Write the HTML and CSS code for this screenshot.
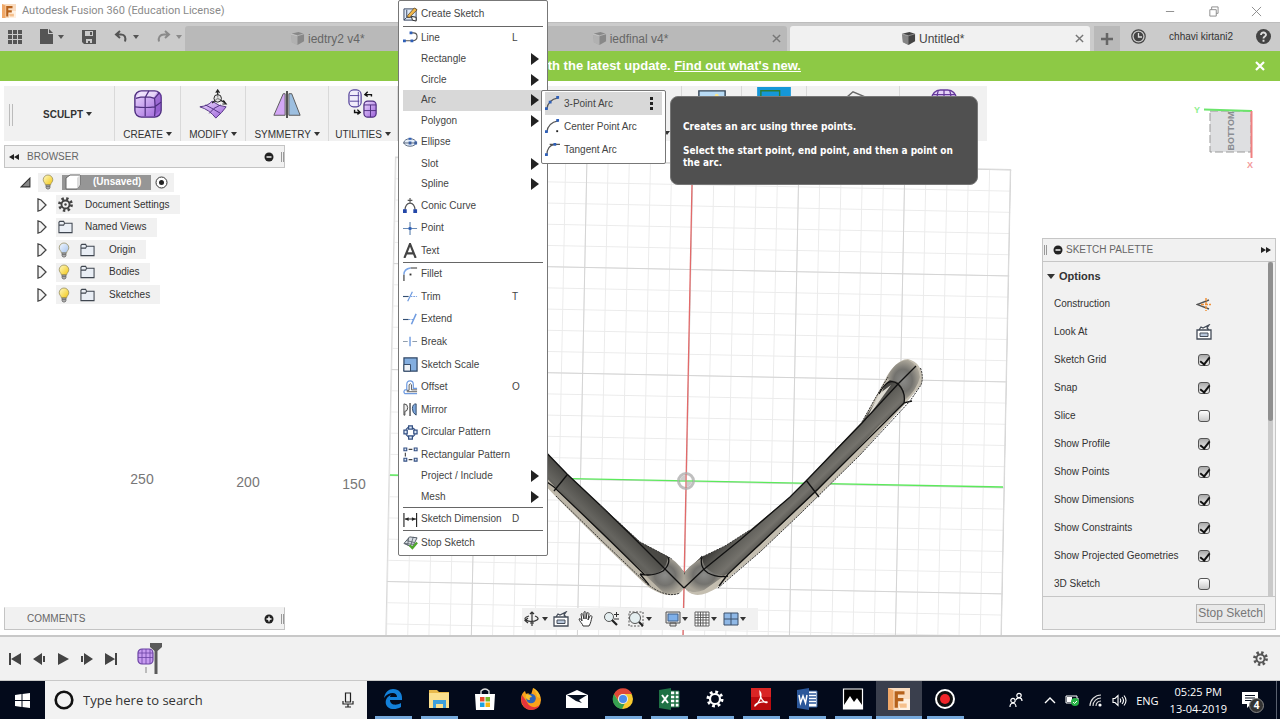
FILE: index.html
```html
<!DOCTYPE html>
<html lang="en">
<head>
<meta charset="utf-8">
<title>Autodesk Fusion 360 (Education License)</title>
<link rel="stylesheet" href="styles.css">
</head>
<body>
<svg class="defs" width="0" height="0" aria-hidden="true">
  <defs>
    <linearGradient id="purple" x1="0" y1="0" x2="1" y2="1"><stop offset="0" stop-color="#eedcff"/><stop offset="1" stop-color="#9a5fd8"/></linearGradient>
    <linearGradient id="bulbOn" x1="0" y1="0" x2="1" y2="1"><stop offset="0" stop-color="#fffbc8"/><stop offset="1" stop-color="#f2c50e"/></linearGradient>
    <linearGradient id="bulbOff" x1="0" y1="0" x2="1" y2="1"><stop offset="0" stop-color="#f4f9ff"/><stop offset="1" stop-color="#a4c2ee"/></linearGradient>
    <symbol id="doc-cube" viewBox="0 0 16 16"><path fill="currentColor" d="M1 3 9 1l6 2v8l-7 4-6-3z"/><path fill="#fff" fill-opacity=".35" d="M1 3l7 2v10l-6-3z"/><path stroke="#fff" stroke-opacity=".4" fill="none" d="M1 3l7 2 7-2"/></symbol>
    <symbol id="bulb" viewBox="0 0 12 16"><path stroke="#8d8252" stroke-width=".7" d="M6 1a4.800 4.800 0 0 0-4.800 4.800c0 2.200 2 3.200 2.300 5.200h5c.3-2 2.300-3 2.300-5.200A4.800 4.800 0 0 0 6 1z"/><path fill="#aaa" stroke="#666" stroke-width=".7" d="M4 11h4v3l-1 1H5l-1-1zM4 12.500h4"/></symbol>
    <symbol id="folder" viewBox="0 0 16 14"><path fill="#e9eef5" stroke="#3f4650" stroke-width="1.100" d="M1 13V2l1-1h4l1 2h8v10zM1 5h5l1-2"/></symbol>
    <symbol id="expand" viewBox="0 0 10 14"><path fill="#f4f4f4" stroke="#444" stroke-width="1.300" d="M1 1v12l3-1 5-5-5-5z"/></symbol>
    <symbol id="gear" viewBox="0 0 16 16"><circle cx="8" cy="8" r="6.400" fill="none" stroke="currentColor" stroke-width="3" stroke-dasharray="2.510 2.510"/><circle cx="8" cy="8" r="4.300" fill="none" stroke="currentColor" stroke-width="2"/><circle cx="8" cy="8" r="1.300" fill="currentColor"/></symbol>
    <symbol id="close" viewBox="0 0 10 10"><path fill="none" stroke="currentColor" stroke-width="1.600" d="M1 1l8 8M9 1L1 9"/></symbol>
    <symbol id="tsbox" viewBox="0 0 32 32"><rect x="2" y="2" width="28" height="28" rx="7" fill="url(#purple)" stroke="#4f2f80" stroke-width="1.500"/><path fill="#7d45bd" fill-opacity=".5" d="M23 9l6-5c2 3 1 14 0 19l-6 5z"/><path fill="#fff" fill-opacity=".5" d="M3 9l5-6h18l-4 6z"/><path fill="none" stroke="#4f2f80" stroke-width="1.300" d="M3 10c7-2 14-2 20 0 1 7 1 13 0 19M23 10l5-6M13 29V9l4-7M2 19c8 1 15 1 21 0l7-5"/></symbol>
    <symbol id="lookat" viewBox="0 0 16 16"><path fill="#fff" stroke="#444c58" stroke-width="1.300" d="M1 6h14v9H1zM3 6l2-3 2 1 6-3-2 3 2 2"/><path fill="#b9c8dc" stroke="#444c58" d="M4 9h8v3.500H4z"/></symbol>
    <symbol id="arrow-right" viewBox="0 0 8 12"><path fill="#222" d="M0 0l8 6-8 6z"/></symbol>
    <symbol id="fusion" viewBox="0 0 20 20"><path fill="#f9dcc0" d="M0 0h20v20H0z"/><path fill="#f0a868" d="M0 0l5 2v18H0z"/><path fill="#fff1e2" d="M10 10h10v10H10z"/><path fill="#b5611b" d="M6 3h9v3H9v3h5v3H9v6H6z"/><path fill="#f6c08c" d="M10 14h7v4h-6z"/></symbol>
  </defs>
</svg>

<header class="titlebar">
  <svg class="app-icon" viewBox="0 0 20 20"><use href="#fusion"/></svg>
  <h1 class="app-title">Autodesk Fusion 360 (Education License)</h1>
  <div class="window-buttons">
    <button aria-label="Minimize"><svg viewBox="0 0 12 12"><path d="M1 6h9"/></svg></button>
    <button aria-label="Restore"><svg viewBox="0 0 12 12"><path d="M2 4h7v7H2zM4 4V1h7v7H9"/></svg></button>
    <button aria-label="Close window"><svg viewBox="0 0 12 12"><path d="M1 1l10 10M11 1L1 11"/></svg></button>
  </div>
</header>

<div class="tabbar">
  <div class="quick">
    <button aria-label="Data panel"><svg width="14" height="14" viewBox="0 0 14 14"><path fill="#555" d="M0 0h4v4H0zM5 0h4v4H5zM10 0h4v4h-4zM0 5h4v4H0zM5 5h4v4H5zM10 5h4v4h-4zM0 10h4v4H0zM5 10h4v4H5zM10 10h4v4h-4z"/></svg></button>
    <button aria-label="File"><svg width="13" height="15" viewBox="0 0 13 15"><path fill="#555" d="M0 0h8v5h5v10H0zM9 0l4 4H9z"/></svg><i class="caret"></i></button>
    <button aria-label="Save"><svg width="14" height="14" viewBox="0 0 14 14"><path fill="#555" fill-rule="evenodd" d="M0 0h14v14H2l-2-2zM3 1v5h8V1zm1 8v4h2v-2h2v2h2V9z"/><path fill="#555" d="M8 2h2v3H8z"/></svg></button>
    <button aria-label="Undo"><svg width="14" height="13" viewBox="0 0 14 13"><path fill="none" stroke="#555" stroke-width="2" d="M6 1L2 4.500 6 8M2 4.500h5c4 0 5 3 4 7"/></svg><i class="caret"></i></button>
    <button aria-label="Redo" class="dim"><svg width="14" height="13" viewBox="0 0 14 13"><path fill="none" stroke="#555" stroke-width="2" d="M8 1l4 3.500L8 8m4-3.500H7c-4 0-6 3-5 7"/></svg><i class="caret"></i></button>
  </div>
  <nav class="tabs">
    <a class="tab" href="#iedtry2"><span class="tab-name"><svg><use href="#doc-cube"/></svg>iedtry2 v4*</span><svg class="tab-close"><use href="#close"/></svg></a>
    <a class="tab" href="#iedfinal"><span class="tab-name"><svg><use href="#doc-cube"/></svg>iedfinal v4*</span><svg class="tab-close"><use href="#close"/></svg></a>
    <a class="tab current" href="#untitled"><span class="tab-name"><svg><use href="#doc-cube"/></svg>Untitled*</span><svg class="tab-close"><use href="#close"/></svg></a>
  </nav>
  <button class="new-tab" aria-label="New design"><svg width="12" height="12" viewBox="0 0 12 12"><path stroke="#666" stroke-width="2.500" d="M6 0v12M0 6h12"/></svg></button>
  <div class="account">
    <button aria-label="Job status"><svg width="15" height="15" viewBox="0 0 15 15"><circle cx="7.500" cy="7.500" r="6.700" fill="none" stroke="#444" stroke-width="1.200"/><circle cx="7.500" cy="7.500" r="4.800" fill="#444"/><path fill="none" stroke="#ddd" stroke-width="1.300" d="M7.500 4v4H11"/></svg></button>
    <button class="user">chhavi kirtani2</button>
    <button aria-label="Help"><svg width="15" height="15" viewBox="0 0 15 15"><circle cx="7.500" cy="7.500" r="7.500" fill="#444"/><path fill="none" stroke="#ddd" stroke-width="1.900" d="M5 6c0-3.500 5.200-3 5 0-.2 1.600-2.500 1.500-2.500 3.500M7.500 10.700v2"/></svg></button>
  </div>
</div>

<div class="banner">
  <p>with the latest update. <a href="#new">Find out what's new.</a></p>
  <button aria-label="Dismiss"><svg width="10" height="10" viewBox="0 0 10 10"><path stroke="#fff" stroke-width="2.200" d="M1 1l8 8M9 1L1 9"/></svg></button>
</div>

<main class="workspace">
  <svg class="canvas" viewBox="0 81 1280 554" preserveAspectRatio="xMidYMid slice" role="img" aria-label="Model viewport">
    <defs>
      <pattern id="minor" width="21.200" height="21.200" patternUnits="userSpaceOnUse"><path d="M0 0H21.200M0 0V21.200" stroke="#ebebeb" stroke-width="2" fill="none"/></pattern>
      <pattern id="major" width="106" height="106" patternUnits="userSpaceOnUse"><path d="M0 0H106M0 0V106" stroke="#d4d4d4" stroke-width="2" fill="none"/></pattern>
      <linearGradient id="armR" gradientUnits="userSpaceOnUse" x1="795" y1="470" x2="818" y2="494"><stop offset="0" stop-color="#3c3b38"/><stop offset=".35" stop-color="#5f5e59"/><stop offset=".7" stop-color="#74726c"/><stop offset="1" stop-color="#4b4a46"/></linearGradient>
      <linearGradient id="armL" gradientUnits="userSpaceOnUse" x1="620" y1="522" x2="602" y2="541"><stop offset="0" stop-color="#4a4945"/><stop offset=".6" stop-color="#666560"/><stop offset="1" stop-color="#55544f"/></linearGradient>
      <radialGradient id="tip"><stop offset="0" stop-color="#8b8b89"/><stop offset=".55" stop-color="#73726e"/><stop offset="1" stop-color="#a9a498"/></radialGradient>
    </defs>
    <g transform="translate(686 481) rotate(1.150)">
      <rect x="-297" y="-318" width="616" height="490" fill="url(#minor)"/>
      <rect x="-297" y="-318" width="616" height="490" fill="url(#major)"/>
      <path d="M-297 172V-318H318V172" fill="none" stroke="#dadada"/>
    </g>
    <path d="M692 184L683 635" stroke="#e26a6a" stroke-width="1.300"/>
    <path d="M390 475L1003 487" stroke="#5bea5b" stroke-width="1.300"/>
    <circle cx="686" cy="481" r="7.500" fill="#fff" fill-opacity=".5" stroke="#aaa" stroke-opacity=".75" stroke-width="3"/>
    <path d="M686 481v-6a6 6 0 0 0-6 6zM686 481h6a6 6 0 0 1-6 6z" fill="#ccc"/>
    <path d="M679 481h14" stroke="#5bea5b"/><path d="M686 474v14" stroke="#e26a6a"/>

    <g class="arm">
      <path fill="#bdb7a9" d="M540 446L567 474 600 505 640 542 667 556 684 572 684 588C680 596 668 599 650 588L645 584 600 541 558 499 540 480z"/>
      <path fill="url(#armL)" d="M540 446L567 474 600 505 640 542 667 556 684 572 684 587C676 592 668 592 652 580L600 532 556 488 540 471z"/>
      <path fill="url(#tip)" d="M668 557Q676 560 684 572L684 587Q676 596 664 593L646 576Q666 574 668 557z"/>
      <path class="seam" d="M540 446L567 474 600 505 630 534 684 588M540 477L554 487 600 531 645 575M567 475L554 491M668 557Q671 564 663 571 652 577 640 574M640 574L649 585"/>
      <path class="edge" d="M600 505L640 542 672 559M556 496L600 539 645 582Q665 599 680 593"/>
    </g>
    <g class="arm">
      <path fill="#c4beb0" d="M684 587C690 597 702 598 718 587L760 552 800 514 860 455 905 404 921 385C925 376 921 362 908 359 898 359 889 372 886 378L862 422 835 450 807 480 790 497 750 530 725 546 700 558 684 573z"/>
      <path fill="url(#armR)" d="M684 587C690 594 700 593 716 580L727 574 760 545 818 490 880 425 904 404Q908 390 898 382 888 374 882 392L862 422 835 450 807 480 790 497 750 530 725 546 700 558 684 573z"/>
      <path fill="#dedbd2" d="M891 385L866 420 879 394z"/>
      <path fill="url(#tip)" d="M886 379Q895 360 908 360 919 365 920 377 917 390 904 401 906 388 898 382z"/>
      <path fill="url(#tip)" d="M702 558Q686 567 684 575L684 587Q690 595 704 590L724 576Q704 573 702 558z"/>
      <path class="seam" d="M684 588L703 570 740 540 790 497 807 480 862 423 898 384 916 366M719 586L728 574 760 544 818 489 880 427 904 403M806 480L819 497M702 556Q699 567 708 573 717 578 728 576M879 394Q888 376 898 384 906 392 904 403L912 401"/>
      <path class="edge" d="M700 558L725 546 750 530M718 588L760 552 800 514 860 455 910 401 921 385Q924 376 920 367M862 422L876 397 888 377"/>
    </g>

    <g class="ruler"><text x="142" y="484">250</text><text x="248" y="487">200</text><text x="354" y="489">150</text></g>

    <g class="viewcube">
      <path d="M1210 111h41v41h-41z" fill="#dedfe1" stroke="#999" stroke-dasharray="8 3"/>
      <text transform="translate(1234 131) rotate(-90)">BOTTOM</text>
      <path d="M1204 109.500L1252 111" stroke="#6be56b" stroke-width="2"/>
      <path d="M1251.500 111V158" stroke="#f08080" stroke-width="2"/>
      <text class="axis-y" x="1197" y="113">Y</text><text class="axis-x" x="1250" y="168">X</text>
    </g>
  </svg>

  <div class="ribbon">
    <button class="group mode"><span class="grip"></span><span class="mode-name">SCULPT <i class="caret"></i></span></button>
    <button class="group create"><svg viewBox="0 0 32 32"><use href="#tsbox"/></svg><span>CREATE <i class="caret"></i></span></button>
    <button class="group modify"><svg viewBox="0 0 32 32"><path fill="url(#purple)" stroke="#4f2f80" d="M2 19q9-1 13-6 8 6 15 6-4 6-11 12Q12 22 2 19z"/><path fill="none" stroke="#4f2f80" d="M8 17q8 4 16 9M24 17q-8 3-12 9"/><path fill="none" stroke="#222" stroke-width="1.300" d="M21 9V1m-2 3l2-3 2 3M21 10l-6 5m6-5l8 5m-2-3l3 4h-4"/><circle cx="21" cy="10" r="4" fill="#ddd" fill-opacity=".6" stroke="#222"/></svg><span>MODIFY <i class="caret"></i></span></button>
    <button class="group symmetry"><svg viewBox="0 0 32 32"><path fill="#d3a7f5" stroke="#555" d="M14 5v23H2L12 5z"/><path fill="#9dbfe0" stroke="#555" d="M18 5v23h12L21 5z"/><path stroke="#111" stroke-width="1.500" d="M16 2v29"/></svg><span>SYMMETRY <i class="caret"></i></span></button>
    <button class="group utilities"><svg viewBox="0 0 32 32"><rect x="1" y="1" width="13" height="18" rx="5" fill="#f0ecfa" stroke="#53419a" stroke-width="1.300"/><path fill="none" stroke="#53419a" d="M2 7h10M2 13h10M11 3v15"/><rect x="17" y="13" width="13" height="17" rx="4" fill="url(#purple)" stroke="#4f2f80" stroke-width="1.300"/><path fill="none" stroke="#4f2f80" d="M17 17h13M17 23h13M24 17v13"/><path fill="none" stroke="#111" stroke-width="1.500" d="M25 8V6h-6m2-3l-3 3 3 2M7 22v3h5m-2-3l3 3-3 2"/></svg><span>UTILITIES <i class="caret"></i></span></button>
    <div class="group covered"><i class="caret"></i></div>
    <button class="group insert" aria-label="Insert"><svg viewBox="0 0 32 32"><path fill="#b8dbf5" stroke="#345" stroke-width="1.500" d="M2 2h28v26H2z"/><path fill="#fff" d="M4 16q6-9 12 0t12-3v13H4z"/><circle cx="21" cy="7" r="2" fill="#ffe78a"/></svg></button>
    <button class="group select" aria-label="Select"><svg viewBox="0 0 36 32"><path fill="#1597d8" d="M0 0h36v32H0z"/><path fill="none" stroke="#2d7d32" stroke-width="1.500" d="M4 4h20v20H4z"/></svg></button>
    <button class="group plane" aria-label="Construct"><svg viewBox="0 0 32 32"><path fill="#eee" stroke="#666" stroke-width="1.500" d="M8 10L16 3l14 6-8 12z"/></svg></button>
    <button class="group mesh" aria-label="Finish form"><svg viewBox="0 0 32 32"><rect x="3" y="1" width="26" height="26" rx="9" fill="#e5d2f8" stroke="#65399b" stroke-width="1.500"/><path fill="none" stroke="#65399b" stroke-width="1.300" d="M4 6h24M3 12h26M10 1q-3 9 0 20M16 1v24M22 1q3 9 0 20"/></svg></button>
  </div>

  <div class="stage">
    <aside class="side">
      <section class="browser">
        <h2 class="panel-head"><svg width="10" height="6" viewBox="0 0 10 6"><path fill="#222" d="M5 0v6L0 3zM10 0v6L5 3z"/></svg><span>BROWSER</span><svg class="knob" viewBox="0 0 10 10"><circle cx="5" cy="5" r="4.500" fill="#222"/><path stroke="#fff" stroke-width="1.400" d="M2.500 5h5"/></svg><i class="bars"></i></h2>
        <ul class="tree">
          <li class="root"><svg class="root-arrow" viewBox="0 0 10 10"><path fill="#888" stroke="#333" d="M9 1v8H1z"/></svg><span class="node"><svg class="bulb on"><use href="#bulb"/></svg><span class="chosen"><svg width="16" height="16" viewBox="0 0 16 16"><path fill="#fff" stroke="#666" d="M1 4l4-3h10v10l-3 4H1z"/><path fill="#ddd" d="M12 4l3-3v10l-3 4z"/></svg><b>(Unsaved)</b></span><svg width="13" height="13" viewBox="0 0 13 13"><circle cx="6.500" cy="6.500" r="5.500" fill="#fff" stroke="#333"/><circle cx="6.500" cy="6.500" r="2.500" fill="#222"/></svg></span></li>
          <li><svg class="exp"><use href="#expand"/></svg><span class="node"><svg class="cog"><use href="#gear"/></svg><span>Document Settings</span></span></li>
          <li><svg class="exp"><use href="#expand"/></svg><span class="node"><svg class="fold"><use href="#folder"/></svg><span>Named Views</span></span></li>
          <li><svg class="exp"><use href="#expand"/></svg><span class="node"><svg class="bulb off"><use href="#bulb"/></svg><svg class="fold"><use href="#folder"/></svg><span>Origin</span></span></li>
          <li><svg class="exp"><use href="#expand"/></svg><span class="node"><svg class="bulb on"><use href="#bulb"/></svg><svg class="fold"><use href="#folder"/></svg><span>Bodies</span></span></li>
          <li><svg class="exp"><use href="#expand"/></svg><span class="node"><svg class="bulb on"><use href="#bulb"/></svg><svg class="fold"><use href="#folder"/></svg><span>Sketches</span></span></li>
        </ul>
      </section>
      <h2 class="panel-head comments"><span>COMMENTS</span><svg class="knob" viewBox="0 0 10 10"><circle cx="5" cy="5" r="4.500" fill="#222"/><path stroke="#fff" stroke-width="1.400" d="M2.500 5h5M5 2.500v5"/></svg><i class="bars"></i></h2>
    </aside>

    <section class="palette">
      <h2 class="palette-head"><i class="bars"></i><svg class="knob" viewBox="0 0 10 10"><circle cx="5" cy="5" r="4.500" fill="#222"/><path stroke="#fff" stroke-width="1.400" d="M2.500 5h5"/></svg><span>SKETCH PALETTE</span><svg width="10" height="6" viewBox="0 0 10 6"><path fill="#222" d="M0 0v6l5-3zM5 0v6l5-3z"/></svg></h2>
      <div class="palette-body">
        <div class="options">
          <h3><i class="caret"></i>Options</h3>
          <div class="row"><span>Construction</span><button aria-label="Construction"><svg width="15" height="15" viewBox="0 0 15 15"><path fill="none" stroke="#555" stroke-width="1.400" d="M13 3L1 7.500l12 4.500"/><path fill="none" stroke="#f0913a" stroke-width="1.500" stroke-dasharray="3 1" d="M10 1v13M5 7.500h10"/></svg></button></div>
          <div class="row"><span>Look At</span><button aria-label="Look At"><svg width="16" height="16"><use href="#lookat"/></svg></button></div>
          <label class="row"><span>Sketch Grid</span><input type="checkbox" checked></label>
          <label class="row"><span>Snap</span><input type="checkbox" checked></label>
          <label class="row"><span>Slice</span><input type="checkbox"></label>
          <label class="row"><span>Show Profile</span><input type="checkbox" checked></label>
          <label class="row"><span>Show Points</span><input type="checkbox" checked></label>
          <label class="row"><span>Show Dimensions</span><input type="checkbox" checked></label>
          <label class="row"><span>Show Constraints</span><input type="checkbox" checked></label>
          <label class="row"><span>Show Projected Geometries</span><input type="checkbox" checked></label>
          <label class="row"><span>3D Sketch</span><input type="checkbox"></label>
        </div>
        <div class="scroll"><div class="thumb"></div></div>
      </div>
      <div class="palette-foot"><button>Stop Sketch</button></div>
    </section>
  </div>

  <div class="navbar">
    <button aria-label="Orbit"><svg viewBox="0 0 16 16"><path fill="none" stroke="#333" stroke-width="1.200" d="M8 1v14M6 3l2-2 2 2M6 12h4M5 5C1 6 0 8 2 9c3 2 8 2 11 0 2-1 1-3-2-4M4 12L1 9.500 4 7"/></svg><i class="caret"></i></button>
    <button aria-label="Look at"><svg><use href="#lookat"/></svg></button>
    <button aria-label="Pan"><svg viewBox="0 0 16 16"><path fill="#fff" stroke="#333" d="M5 15c0-2-4-5-4-7 1-1 2 0 3 2L3 3c1-1 2 0 2 1l1 4V1c1-1 2 0 2 1v6l1-6c1-1 2 0 2 1l-1 6 2-4c1-1 2 0 2 1-1 3-1 6-3 9z"/></svg></button>
    <button aria-label="Zoom"><svg viewBox="0 0 16 16"><circle cx="6" cy="6" r="4.500" fill="#e4eef0" stroke="#555"/><path stroke="#222" stroke-width="2.200" d="M9 9l5 5"/><path stroke="#333" d="M11 3.500h5M13.500 1v5M11 8h5"/></svg></button>
    <button aria-label="Fit"><svg viewBox="0 0 16 16"><path fill="none" stroke="#555" stroke-dasharray="2 1.500" d="M1 1h14v14H1z"/><circle cx="7" cy="7" r="5.500" fill="#e4eef0" stroke="#555"/><path stroke="#222" stroke-width="2.200" d="M11 11l4 4"/></svg><i class="caret"></i></button>
    <button class="wide first" aria-label="Display settings"><svg viewBox="0 0 16 16"><path fill="#ddd" stroke="#555" d="M1 1h14v11H1zM5 12h6v3H5z"/><path fill="#7fb0ea" stroke="#3e5f88" d="M3 3h10v7H3z"/></svg><i class="caret"></i></button>
    <button class="wide" aria-label="Grid and snaps"><svg viewBox="0 0 16 16"><path fill="#fff" stroke="#555" stroke-width=".9" d="M1 1h14v14H1zM1 4h14M1 6.500h14M1 9h14M1 12h14M4 1v14M6.500 1v14M9 1v14M12 1v14"/></svg><i class="caret"></i></button>
    <button class="wide" aria-label="Viewports"><svg viewBox="0 0 16 16"><path fill="#8fb8e6" stroke="#3b4f68" d="M1 2h14v12H1zM8 2v12M1 8h14"/></svg><i class="caret"></i></button>
  </div>
</main>

<section class="timeline">
  <div class="player">
    <button aria-label="Go to start"><svg viewBox="0 0 12 12"><path d="M0 0h2v12H0zM12 0v12L2 6z"/></svg></button>
    <button aria-label="Step back"><svg viewBox="0 0 12 12"><path d="M9 0v12L0 6zM10 3h2v6h-2z"/></svg></button>
    <button aria-label="Play"><svg viewBox="0 0 12 12"><path d="M1 0l11 6-11 6z"/></svg></button>
    <button aria-label="Step forward"><svg viewBox="0 0 12 12"><path d="M3 0v12l9-6zM0 3h2v6H0z"/></svg></button>
    <button aria-label="Go to end"><svg viewBox="0 0 12 12"><path d="M10 0h2v12h-2zM0 0v12l10-6z"/></svg></button>
  </div>
  <svg class="marker" width="28" height="32" viewBox="0 0 28 32"><rect x="2" y="6" width="15" height="15" rx="4" fill="#c79bf0" stroke="#6a42a3" stroke-width="1.200"/><path fill="none" stroke="#6a42a3" stroke-width=".8" d="M2 10h15M2 14.500h15M6 6v15M10 6v15M14 6v15"/><path stroke="#bbb" stroke-width="2" d="M10 24v6"/><path fill="#5a5a5a" d="M14 0h12v4l-4.500 4V31h-3V8L14 4z"/></svg>
  <button class="settings" aria-label="Timeline settings"><svg><use href="#gear"/></svg></button>
</section>

<footer class="taskbar">
  <button class="start" aria-label="Start"><svg width="15" height="15" viewBox="0 0 15 15"><path fill="#fff" d="M0 2l6.500-1v6H0zM7.500 1L15 0v7H7.500zM0 8h6.500v6L0 13zM7.500 8H15v7l-7.500-1z"/></svg></button>
  <label class="search"><svg width="20" height="20" viewBox="0 0 20 20"><circle cx="10" cy="10" r="8.300" fill="none" stroke="#111" stroke-width="2.600"/></svg><input type="text" placeholder="Type here to search" aria-label="Search"><svg width="12" height="16" viewBox="0 0 12 16"><path fill="none" stroke="#222" stroke-width="1.200" d="M3.500 1h5v9h-5zM1 9v3h10V9M6 12v3M3 15h6"/></svg></label>
  <div class="apps">
    <button class="open" aria-label="Edge"><svg viewBox="0 0 22 22"><path fill="#1380d9" d="M2 10C3 4 7 1 11 1c6 0 9 4 9 9v2H8c0 5 6 6 11 3v4C10 24 2 19 4 12c1-3 3-4 5-5-1 1-1 2-1 2h7c0-6-9-5-13 1z"/></svg></button>
    <button class="open" aria-label="File Explorer"><svg viewBox="0 0 22 22"><path fill="#e8b94c" d="M1 2h8l2 2h10v4H1z"/><path fill="#fbe08e" d="M1 5h20v15H1z"/><path fill="#3ea0dc" d="M5 12h13v8h-3v-4H8v4H5z"/></svg></button>
    <button aria-label="Microsoft Store"><svg viewBox="0 0 22 22"><path fill="none" stroke="#ddd" stroke-width="1.400" d="M7 7V3q4-4 8 0v4"/><path fill="#fff" d="M1 6h20l-1 16H2z"/><path fill="#e94b2c" d="M6 9h4.500v4.500H6z"/><path fill="#75b72a" d="M11.500 9H16v4.500h-4.500z"/><path fill="#1da2e2" d="M6 14.500h4.500V19H6z"/><path fill="#f8b812" d="M11.500 14.500H16V19h-4.500z"/></svg></button>
    <button aria-label="Firefox"><svg viewBox="0 0 22 22"><path fill="#f9a21b" d="M13 0c2 1 8 5 8 12a10 10 0 0 1-20 0C1 7 3 4 5 3l1 3c2-1 4 0 5 1z"/><path fill="#e5353b" d="M2 7c-3 8 3 15 9 15 5 0 8-3 9-5-5 4-11 2-13-3L2 7z"/><circle cx="11" cy="10.500" r="4.800" fill="#2d63b8"/><path fill="#f8c22d" d="M6 7c3-1 5 0 6 2-2 0-3 1-2 3-3 0-5-2-4-5zM13 0c2 3 4 5 4 9l3 1c0-5-3-8-7-10z"/></svg></button>
    <button aria-label="Mail"><svg viewBox="0 0 22 22"><path fill="#fff" d="M0 7L11 2l11 5v13H0z"/><path fill="#071021" d="M1 7h20l-8 5 3 3-6-2z"/></svg></button>
    <button class="open" aria-label="Chrome"><svg viewBox="0 0 22 22"><circle cx="11" cy="11" r="10" fill="#f7c92f"/><path fill="#df4738" d="M2 6a10 10 0 0 1 18 0H11a5 5 0 0 0-5 6z"/><path fill="#37a052" d="M2 6l5 8c2 3 5 2 6 1l-3 6A10 10 0 0 1 2 6z"/><circle cx="11" cy="11" r="5" fill="#eee"/><circle cx="11" cy="11" r="4" fill="#4a8bec"/></svg></button>
    <button class="open" aria-label="Excel"><svg viewBox="0 0 22 22"><path fill="#fff" stroke="#217346" d="M11 3h10v16H11z"/><path stroke="#217346" stroke-width="1.500" d="M12 7h9M12 11h9M12 15h9M17 3v16"/><path fill="#1e7145" d="M1 2l12-2v22L1 20z"/><path stroke="#fff" stroke-width="2" d="M4 7l6 8M10 7l-6 8"/></svg></button>
    <button class="open" aria-label="Settings"><svg viewBox="0 0 22 22"><circle cx="11" cy="11" r="5" fill="none" stroke="#fff" stroke-width="2.200"/><circle cx="11" cy="11" r="7" fill="none" stroke="#fff" stroke-width="3" stroke-dasharray="2.750 2.750"/></svg></button>
    <button class="open" aria-label="Acrobat Reader"><svg viewBox="0 0 22 22"><path fill="#b90b0e" d="M1 0h20v22H1z"/><path fill="#d92525" d="M1 0h20v9H1z"/><path fill="none" stroke="#fff" stroke-width="1.300" d="M10 4c3 4-2 12-5 14-1-2 6-5 12-4 1 2-7 0-7-10z"/></svg></button>
    <button class="open" aria-label="Word"><svg viewBox="0 0 22 22"><path fill="#fff" stroke="#2b579a" d="M11 3h10v16H11z"/><path stroke="#2b579a" stroke-width="1.500" d="M13 6h7M13 9h7M13 12h7M13 15h7"/><path fill="#2b579a" d="M1 2l12-2v22L1 20z"/><path fill="none" stroke="#fff" stroke-width="1.500" d="M3 7l1.500 8L7 8l2.500 7L11 7"/></svg></button>
    <button class="open" aria-label="Photos"><svg viewBox="0 0 22 22"><path fill="#000" stroke="#fff" stroke-width="1.200" d="M1.500 1h19v20h-19z"/><path fill="#fff" d="M2 17l6-9 4 6 3-4 5 7v4H2z"/></svg></button>
    <button class="open active" aria-label="Fusion 360"><svg viewBox="0 0 20 20"><use href="#fusion"/></svg></button>
    <button class="open" aria-label="Recorder"><svg viewBox="0 0 22 22"><circle cx="11" cy="11" r="9" fill="#111" stroke="#fff" stroke-width="2"/><circle cx="11" cy="11" r="5" fill="#f0252a"/></svg></button>
  </div>
  <div class="tray">
    <button aria-label="People"><svg width="14" height="16" viewBox="0 0 14 16"><path fill="none" stroke="#fff" stroke-width="1.200" d="M1 15c0-5 6-5 6 0M7 8c1-3 6-3 6 1"/><circle cx="4" cy="8.500" r="2.200" fill="none" stroke="#fff" stroke-width="1.200"/><circle cx="10" cy="3.500" r="2.200" fill="none" stroke="#fff" stroke-width="1.200"/></svg></button>
    <button aria-label="Hidden icons"><svg width="12" height="7" viewBox="0 0 12 7"><path fill="none" stroke="#fff" stroke-width="1.400" d="M1 6l5-5 5 5"/></svg></button>
    <button aria-label="Battery"><svg width="15" height="13" viewBox="0 0 15 13"><path fill="none" stroke="#fff" d="M1 2h11v7H1zM13 4v3"/><path fill="#fff" d="M2 3h5v5H2z"/><circle cx="10" cy="8" r="4" fill="#27b346"/><path fill="none" stroke="#fff" d="M8 8l1.500 1.500L12 7"/></svg></button>
    <button aria-label="Wi-Fi"><svg width="14" height="13" viewBox="0 0 14 13"><path fill="none" stroke="#ddd" stroke-width="1.100" d="M1 12C1 6 6 1 12 1M4 12c0-5 4-8 8-8M7 12c0-3 2-5 5-5"/><circle cx="11" cy="11" r="1.600" fill="#fff"/></svg></button>
    <button aria-label="Volume"><svg width="15" height="13" viewBox="0 0 15 13"><path fill="none" stroke="#fff" stroke-width="1.100" d="M1 4.500h2l3-3v10l-3-3H1zM8 4.500q1.500 2 0 4M10 3q3 3.500 0 7M12 1.500q4 5 0 10"/></svg></button>
    <button class="lang">ENG</button>
    <button class="clock"><time>05:25 PM</time><time>13-04-2019</time></button>
    <button class="notes" aria-label="Notifications"><svg width="16" height="16" viewBox="0 0 16 16"><path fill="#fff" d="M0 0h16v12H9l-4 4v-4H0z"/><path stroke="#071021" d="M3 3.500h10M3 6h10M3 8.500h7"/></svg><b class="badge">4</b></button>
  </div>
</footer>

<ul class="menu" role="menu">
  <li class="item"><button><svg viewBox="0 0 16 16"><path fill="#dce8f7" stroke="#33415c" d="M1 2h13v12H1z"/><path fill="none" stroke="#33415c" d="M4 3v8h9M1 14l3-3"/><path fill="#f2b84b" stroke="#5a4320" stroke-width=".8" d="M5 9l7-8 3 2-8 8H5z"/><path fill="#fff" stroke="#222" d="M9 10l5 1v4l-4-1z"/></svg>Create Sketch</button></li>
  <li class="line"></li>
  <li class="item"><button><svg viewBox="0 0 16 16"><path fill="none" stroke="#555" stroke-width="1.200" d="M1 11.500h8M8 3h3q4 0 4 4t-4 4.500H9"/><path fill="#2e5fb8" d="M0 10h3v3H0zM7 1.500h3v3H7zM8 10h3v3H8z"/></svg>Line<kbd>L</kbd></button></li>
  <li class="item sub"><button><i></i>Rectangle<svg class="more"><use href="#arrow-right"/></svg></button></li>
  <li class="item sub"><button><i></i>Circle<svg class="more"><use href="#arrow-right"/></svg></button></li>
  <li class="item sub hot"><button><i></i>Arc<svg class="more"><use href="#arrow-right"/></svg></button></li>
  <li class="item sub"><button><i></i>Polygon<svg class="more"><use href="#arrow-right"/></svg></button></li>
  <li class="item"><button><svg viewBox="0 0 16 16"><ellipse cx="7.500" cy="8" rx="6.500" ry="4" fill="#e4edf8" stroke="#56657c"/><path fill="#2e5fb8" d="M6 7h3v3H6zM12 7h3v3h-3zM6 3h3v2H6z"/><path stroke="#56657c" d="M0 8.500h15"/></svg>Ellipse</button></li>
  <li class="item sub"><button><i></i>Slot<svg class="more"><use href="#arrow-right"/></svg></button></li>
  <li class="item sub"><button><i></i>Spline<svg class="more"><use href="#arrow-right"/></svg></button></li>
  <li class="item"><button><svg viewBox="0 0 16 16"><path fill="none" stroke="#555" stroke-width="1.200" d="M2 13C3 3 12 3 13 13M7.500 0v5M5 2.500h5"/><path fill="#2447a8" d="M0 12h4v4H0zM11 12h4v4h-4z"/></svg>Conic Curve</button></li>
  <li class="item"><button><svg viewBox="0 0 16 16"><path stroke="#6b8cb5" stroke-width="1.300" d="M7.500 1v14M0 8h15"/><path fill="#2e5fb8" d="M6 6.500h3v3H6z"/></svg>Point</button></li>
  <li class="item"><button><svg viewBox="0 0 16 16"><path fill="none" stroke="#444" stroke-width="2.300" d="M1.500 16L7.500 1l6 15M3.500 11h8"/></svg>Text</button></li>
  <li class="line"></li>
  <li class="item"><button><svg viewBox="0 0 16 16"><path fill="none" stroke="#333" stroke-width="1.200" d="M1 15V8M8 1h7"/><path fill="none" stroke="#7ba6e8" stroke-width="1.600" d="M1 8q0-6 7-7"/><path fill="#333" d="M7 7h2v2H7z"/></svg>Fillet</button></li>
  <li class="item"><button><svg viewBox="0 0 16 16"><path stroke="#334f72" stroke-width="1.200" d="M0 8h6"/><path stroke="#6f9be0" stroke-width="1.300" d="M5 13L10 3"/><path stroke="#6f9be0" stroke-dasharray="2 1" d="M8 8h7"/></svg>Trim<kbd>T</kbd></button></li>
  <li class="item"><button><svg viewBox="0 0 16 16"><path stroke="#334f72" stroke-width="1.200" d="M0 8h6"/><path stroke="#6f9be0" stroke-width="1.600" d="M9 13l5-11"/><path stroke="#6f9be0" stroke-dasharray="2 1" d="M6 8h5"/></svg>Extend</button></li>
  <li class="item"><button><svg viewBox="0 0 16 16"><path stroke="#8a97a8" d="M0 8h5M10 8h5"/><path stroke="#6f9be0" stroke-width="1.500" d="M7.500 3v10"/></svg>Break</button></li>
  <li class="item"><button><svg viewBox="0 0 16 16"><path fill="#83aee0" stroke="#2f4665" stroke-width="1.300" d="M1 1h14v14H1z"/><path fill="#eef2f7" stroke="#2f4665" d="M1 8h7v7H1z"/></svg>Sketch Scale</button></li>
  <li class="item"><button><svg viewBox="0 0 16 16"><path fill="none" stroke="#6f9be0" stroke-width="1.300" d="M15 14.500H2q-2-2 0-4h2V5q0-4 3.500-4T11 5v4h4"/><path fill="none" stroke="#555" d="M15 12.500H4M15 10.500H9V5q-1-2-2.500 0v6H4"/></svg>Offset<kbd>O</kbd></button></li>
  <li class="item"><button><svg viewBox="0 0 16 16"><path fill="#eee" stroke="#444" d="M1 2q4 0 4 4t-3 4v4H1z"/><path stroke="#222" stroke-width="1.200" d="M7.500 1v14"/><path fill="#7ba6dc" stroke="#2f4665" d="M14 2q-4 0-4 5t4 7z"/></svg>Mirror</button></li>
  <li class="item"><button><svg viewBox="0 0 16 16"><g fill="#dce9f8" stroke="#334f82" stroke-width="1.300"><path d="M6 1h4v3.500H6zM11.500 5.500h3.500v4h-3.500zM1 5.500h3.500v4H1zM6 11.500h4V15H6z"/><path fill="none" d="M10 3l3 2M3 10l3 3M13 10l-3 3M3 5l3-3"/></g></svg>Circular Pattern</button></li>
  <li class="item"><button><svg viewBox="0 0 16 16"><g fill="#dce9f8" stroke="#334f82" stroke-width="1.200"><path d="M1 1h3v3H1zM12 1h3v3h-3zM1 12h3v3H1zM12 12h3v3h-3z"/><path fill="none" stroke="#444" d="M6 2.500h4M2.500 6v4M6 13.500h4"/></g></svg>Rectangular Pattern</button></li>
  <li class="item sub"><button><i></i>Project / Include<svg class="more"><use href="#arrow-right"/></svg></button></li>
  <li class="item sub"><button><i></i>Mesh<svg class="more"><use href="#arrow-right"/></svg></button></li>
  <li class="line"></li>
  <li class="item"><button><svg viewBox="0 0 16 16"><path fill="none" stroke="#222" stroke-width="1.200" d="M1 1v15M14.500 1v15M2 7.500h12"/><path fill="#222" d="M2 7.500l4-2v4zM13.500 7.500l-4-2v4z"/></svg>Sketch Dimension<kbd>D</kbd></button></li>
  <li class="line"></li>
  <li class="item"><button><svg viewBox="0 0 16 16"><path fill="#d8dde3" stroke="#4c5560" d="M1 9l6-7 8 1-5 10z"/><path stroke="#4c5560" stroke-width=".8" d="M4 6l8 2M6 3l-1 8M11 2L8 12M2 9l9 1"/><path fill="none" stroke="#4ea82a" stroke-width="2.400" d="M7 11l3 3 5-6"/></svg>Stop Sketch</button></li>
</ul>

<ul class="submenu" role="menu">
  <li class="hot"><button><svg viewBox="0 0 16 16"><path fill="none" stroke="#555" stroke-width="1.200" d="M2 14Q3 4 14 2"/><path fill="#2e5fb8" d="M0 12h3v3H0zM4 5h3v3H4zM12 0h3v3h-3z"/></svg>3-Point Arc<span class="dots"></span></button></li>
  <li><button><svg viewBox="0 0 16 16"><path fill="none" stroke="#555" stroke-width="1.200" d="M2 14Q3 4 14 2"/><path fill="#2e5fb8" d="M0 12h3v3H0zM12 0h3v3h-3z"/><path fill="#222" d="M12 12h2v2h-2z"/></svg>Center Point Arc</button></li>
  <li><button><svg viewBox="0 0 16 16"><path fill="none" stroke="#555" stroke-width="1.200" d="M2 14Q2 4 10 2.500M5 2.500h11"/><path fill="#2e5fb8" d="M0 12h3v3H0zM9 1h3v3H9z"/></svg>Tangent Arc</button></li>
</ul>

<div class="tooltip" role="tooltip">
  <p>Creates an arc using three points.</p>
  <p>Select the start point, end point, and then a point on the arc.</p>
</div>
</body>
</html>
```
FILE: styles.css
```css
* { box-sizing: border-box; }
body {
  margin: 0;
  min-height: 100vh;
  display: flex;
  flex-direction: column;
  position: relative;
  overflow: hidden;
  background: #fff;
  color: #333;
  font: 10px/12px "Liberation Sans", Arial, sans-serif;
}
h1, h2, h3 { font-weight: normal; font-size: inherit; }
h1, h2, h3, p, ul { margin: 0; padding: 0; }
ul { list-style: none; }
button {
  display: flex;
  align-items: center;
  border: 0;
  padding: 0;
  background: none;
  color: inherit;
  font: inherit;
}
a { color: inherit; text-decoration: none; }
svg { display: block; flex: none; }
.defs { position: absolute; }
.caret {
  display: inline-block;
  border: 3px solid transparent;
  border-top: 4px solid #333;
  border-bottom: 0;
}

/* Title bar */
.titlebar { display: flex; align-items: center; height: 22px; padding: 0 18px 0 2px; }
.app-icon { width: 14px; height: 14px; margin-right: 6px; }
.app-title { flex: 1; color: #8a8a8a; font: 11px/22px Roboto, "Open Sans", sans-serif; }
.window-buttons { display: flex; gap: 32px; }
.window-buttons svg { width: 11px; height: 11px; fill: none; stroke: #888; }

/* Document tabs */
.tabbar {
  display: flex;
  align-items: stretch;
  height: 29px;
  padding-top: 3px;
  background: #cbcbcb;
  border-top: 1px solid #bdbdbd;
}
.quick { display: flex; gap: 18px; align-items: center; width: 185px; padding: 0 8px 4px; }
.quick button { gap: 5px; }
.quick .caret { border-top-color: #555; }
.dim { opacity: .55; }
.tabs { display: flex; flex: 1; gap: 3px; }
.tab {
  display: flex;
  align-items: center;
  flex: 1;
  padding-right: 6px;
  border-radius: 3px 3px 0 0;
  background: #b9b9b9;
  color: #666;
  font-size: 12px;
}
.tab-name { display: flex; flex: 1; justify-content: center; align-items: center; gap: 3px; }
.tab-name svg { width: 15px; height: 15px; color: #888; }
.tab-close { width: 9px; height: 9px; color: #777; }
.tab.current { background: #f1f1f1; color: #444; }
.tab.current .tab-name svg { color: #444; }
.new-tab { justify-content: center; width: 26px; margin-left: 4px; background: #b9b9b9; }
.account { display: flex; align-items: center; gap: 23px; padding: 0 9px 4px 11px; color: #333; }

/* Update banner */
.banner {
  display: flex;
  align-items: center;
  height: 30px;
  padding: 0 15px 0 80px;
  background: #8dc945;
  color: #fff;
  font: bold 13px/30px "Liberation Sans", Arial, sans-serif;
}
.banner p { flex: 1; text-align: center; }
.banner a { text-decoration: underline; }

/* Modelling area */
.workspace {
  position: relative;
  display: flex;
  flex: 1;
  flex-direction: column;
  padding: 5px 4px;
  overflow: hidden;
}
.canvas { position: absolute; inset: 0; width: 100%; height: 100%; }
.seam { fill: none; stroke: #111; stroke-width: 1.3; }
.edge { fill: none; stroke: #333; stroke-dasharray: 2 1; stroke-width: 1; }
.ruler { fill: #777; font-size: 14px; text-anchor: middle; }
.viewcube { fill: #8a8d92; font-weight: bold; font-size: 9px; text-anchor: middle; }
.axis-y { fill: #8df08d; }
.axis-x { fill: #f39a9a; }

.ribbon {
  position: relative;
  display: flex;
  align-self: flex-start;
  height: 55px;
  background: #f1f1f1;
}
.group {
  display: flex;
  flex-direction: column;
  align-items: center;
  justify-content: space-between;
  padding: 3px 0 0;
  border-right: 1px solid #d9d9d9;
}
.group svg { width: 30px; height: 30px; }
.group .caret { margin-bottom: 2px; }
.mode { flex-direction: row; justify-content: flex-start; width: 111px; font-weight: bold; }
.grip { width: 4px; height: 22px; margin: 0 30px 0 5px; border: solid #bbb; border-width: 0 1px; }
.create { width: 66px; }
.modify { width: 65px; }
.symmetry { width: 83px; }
.utilities { width: 69px; }
.covered { width: 284px; align-items: flex-end; justify-content: flex-end; padding: 0 11px 4px; }
.insert { width: 60px; }
.select { width: 65px; padding-top: 1px; }
.select svg { width: 36px; }
.plane { width: 93px; }
.mesh { width: 87px; border: 0; }

.stage { display: flex; flex: 1; justify-content: space-between; }
.side {
  position: relative;
  display: flex;
  flex-direction: column;
  justify-content: space-between;
  width: 281px;
  padding-top: 4px;
}
.panel-head {
  display: flex;
  align-items: center;
  height: 23px;
  padding: 0 0 0 4px;
  border: 1px solid #c4c4c4;
  background: #f1f1f1;
  color: #666;
}
.panel-head span { flex: 1; margin-left: 8px; }
.comments { padding-left: 14px; border-top-color: #f1f1f1; }
.knob { width: 10px; height: 10px; }
.bars { width: 3px; height: 10px; margin-left: 7px; border: solid #999; border-width: 0 1px; }

.tree { display: grid; grid-auto-rows: 1fr; height: 135px; margin-top: 3px; }
.tree li { display: flex; align-items: center; gap: 9px; padding-left: 33px; }
.tree .root { gap: 7px; padding-left: 16px; }
.node {
  display: flex;
  align-items: center;
  gap: 10px;
  height: 19px;
  padding: 0 10px 0 2px;
  background: #f1f1f1;
}
.root .node { gap: 4px; padding: 0 6px 0 4px; }
.node > .cog + span, .node > .fold:first-child + span { padding-left: 2px; }
.node > .bulb + .fold + span { padding-left: 4px; }
.exp { width: 10px; height: 14px; }
.root-arrow { width: 11px; height: 11px; }
.bulb { width: 12px; height: 16px; }
.bulb.on { fill: url(#bulbOn); }
.bulb.off { fill: url(#bulbOff); }
.root .bulb { margin-right: 4px; }
.fold { width: 15px; height: 14px; }
.cog { width: 15px; height: 15px; color: #444; }
.chosen { display: flex; align-items: center; gap: 12px; height: 15px; padding: 0 10px 0 3px; background: #969696; color: #fff; }

/* Sketch palette */
.palette {
  position: relative;
  display: flex;
  flex-direction: column;
  align-self: flex-end;
  width: 234px;
  border: 1px solid #c6c6c6;
  background: #f1f1f1;
}
.palette-head { display: flex; align-items: center; gap: 3px; height: 23px; padding-right: 4px; border-bottom: 1px solid #c6c6c6; color: #666; }
.palette-head .bars { margin: 0 3px 0 1px; }
.palette-head span { flex: 1; }
.palette-body { display: flex; height: 334px; overflow: hidden; }
.options { flex: 1; }
.options h3 { display: flex; align-items: center; gap: 4px; height: 28px; padding-left: 4px; font-weight: bold; font-size: 11px; }
.options h3 .caret { border-width: 5px 4px 0; }
.row { display: grid; grid-template-columns: 1fr 72px; align-items: center; height: 28px; padding-left: 11px; }
.row button { width: 16px; }
.row input {
  appearance: none;
  position: relative;
  width: 12px;
  height: 12px;
  margin: 0 2px;
  border: 1px solid #555;
  border-radius: 3px;
  background: linear-gradient(#fff, #c9c9c9);
}
.row input:checked { background: linear-gradient(#aaa, #eee); }
.row input:checked::after {
  content: "";
  position: absolute;
  left: 3px;
  top: 0;
  width: 4px;
  height: 8px;
  border: solid #111;
  border-width: 0 2px 2px 0;
  transform: rotate(38deg);
}
.scroll { width: 5px; margin-right: 2px; background: #c9c9c9; }
.thumb { height: 159px; border-radius: 3px; background: #8f8f8f; }
.palette-foot { display: flex; align-items: center; justify-content: flex-end; height: 33px; padding-right: 10px; border-top: 1px solid #c6c6c6; }
.palette-foot button { height: 19px; padding: 0 1px; border: 1px solid #b5b5b5; background: #e9e9e9; color: #777; font-size: 12px; }

/* View controls over the canvas */
.navbar {
  position: absolute;
  left: 50%;
  bottom: 5px;
  display: flex;
  align-items: center;
  gap: 9px;
  width: 236px;
  height: 22px;
  padding: 0 2px;
  background: #f1f1f1;
  transform: translateX(-50%);
}
.navbar button { gap: 2px; }
.navbar svg { width: 16px; height: 16px; }
.navbar .wide { gap: 1px; margin-right: -3px; }
.navbar .first { margin-left: 4px; }
.navbar button:first-child { margin-right: -4px; }

/* Timeline */
.timeline {
  display: flex;
  align-items: center;
  height: 46px;
  padding: 0 12px 0 9px;
  border: solid #c8c8c8;
  border-width: 2px 0 1px;
  background: #f1f1f1;
  color: #555;
}
.player { display: flex; gap: 12px; }
.player svg { width: 12px; height: 12px; fill: #444; }
.marker { margin-left: 19px; }
.settings { margin-left: auto; }
.settings svg { width: 15px; height: 15px; }

/* Taskbar */
.taskbar { display: flex; height: 38px; background: #030a1b; color: #fff; font: 11px/17px "Open Sans", "Noto Sans", sans-serif; }
.start { justify-content: center; width: 45px; }
.search { display: flex; align-items: center; flex: 0 1 322px; gap: 9px; padding: 0 13px 0 9px; background: #f2f2f2; }
.search input { flex: 1; min-width: 0; border: 0; padding: 0; background: none; color: #333; font: 13px/20px "Open Sans", "Noto Sans", sans-serif; }
.search input::placeholder { color: #333; opacity: 1; }
.apps { display: flex; flex: 1; padding-left: 3px; }
.apps button { justify-content: center; width: 46px; border-bottom: 3px solid transparent; }
.apps svg { width: 22px; height: 22px; }
.apps .open { background: linear-gradient(#76a9dc, #76a9dc) bottom / 37px 3px no-repeat border-box; }
.apps .active { background: linear-gradient(#76a9dc, #76a9dc) bottom / 46px 3px no-repeat border-box, #3a3f4d; }
.tray { display: flex; align-items: center; gap: 9px; margin-right: 3px; padding-right: 18px; border-right: 1px solid #59606e; }
.tray button:first-child { margin-right: 12px; }
.clock { flex-direction: column; margin: 0 6px 0 2px; }
.notes { position: relative; }
.badge {
  position: absolute;
  left: 7px;
  top: 6px;
  width: 15px;
  height: 15px;
  border: 1px solid #888;
  border-radius: 50%;
  background: #333;
  font-size: 10px;
  line-height: 13px;
  text-align: center;
}

/* Sketch menu */
.menu, .submenu { position: absolute; border: 1px solid #777; border-radius: 2px; background: #fff; color: #444; }
.menu { left: 398px; top: 0; display: flex; flex-direction: column; width: 150px; height: 556px; padding: 2px 4px 1px; }
.item { display: flex; flex: 45 0 0; }
.item.sub { flex-grow: 41; }
.item button { flex: 1; gap: 3px; text-align: left; }
.item button > svg:first-child, .item i { width: 15px; height: 15px; }
.item kbd { position: absolute; left: 113px; font: inherit; }
.item .more { width: 8px; height: 12px; margin: 0 4px 0 auto; }
.line { height: 1px; background: #666; }
.menu .hot { margin-right: -4px; padding-right: 4px; }
.hot { background: #d8d8d8; }
.submenu { left: 541px; top: 90px; width: 125px; padding: 1px 3px 2px; }
.submenu li { height: 23px; }
.submenu button { width: 100%; height: 100%; gap: 4px; }
.submenu svg { width: 15px; height: 15px; }
.dots { width: 3px; height: 13px; margin: 0 9px 0 auto; background: linear-gradient(#222 3px, transparent 3px) 0 0 / 3px 5px; }

.tooltip {
  position: absolute;
  left: 670px;
  top: 96px;
  width: 308px;
  padding: 24px 18px 15px 12px;
  border: 1px solid #777;
  border-radius: 8px;
  background: #505050;
  color: #fff;
  font: bold 10px/12px "DejaVu Sans Condensed", "Noto Sans", sans-serif;
}
.tooltip p + p { margin-top: 12px; }
```
